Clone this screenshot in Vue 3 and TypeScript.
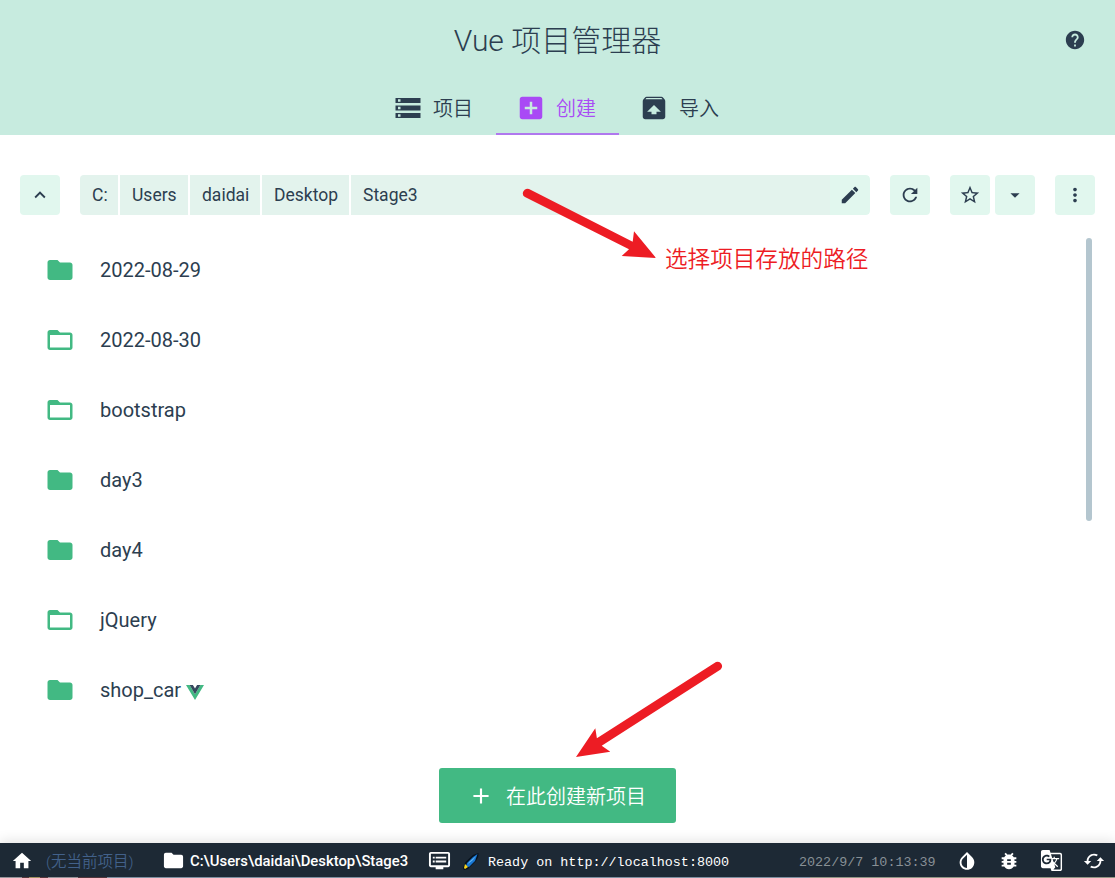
<script setup lang="ts">
interface Tab { label: string; icon: string; active?: boolean }
interface Folder { name: string; filled: boolean; vue?: boolean }

const icons = {
  storage: 'M2 20h20v-4H2v4zm2-3h2v2H4v-2zM2 4v4h20V4H2zm4 3H4V5h2v2zm-4 7h20v-4H2v4zm2-3h2v2H4v-2z',
  addBox: 'M19 3H5c-1.11 0-2 .9-2 2v14c0 1.1.89 2 2 2h14c1.1 0 2-.9 2-2V5c0-1.1-.9-2-2-2zm-2 10h-4v4h-2v-4H7v-2h4V7h2v4h4v2z',
  unarchive: 'M20.55 5.22l-1.39-1.68C18.88 3.21 18.47 3 18 3H6c-.47 0-.88.21-1.15.55L3.46 5.22C3.17 5.57 3 6.01 3 6.5V19c0 1.1.89 2 2 2h14c1.1 0 2-.9 2-2V6.5c0-.49-.17-.93-.45-1.28zM12 9.5l5.5 5.5H14v2h-4v-2H6.5L12 9.5zM5.12 5l.82-1h12l.93 1H5.12z',
  help: 'M12 2C6.48 2 2 6.48 2 12s4.48 10 10 10 10-4.48 10-10S17.52 2 12 2zm1 17h-2v-2h2v2zm2.07-7.75l-.9.92C13.45 12.9 13 13.5 13 15h-2v-.5c0-1.1.45-2.1 1.17-2.83l1.24-1.26c.37-.36.59-.86.59-1.41 0-1.1-.9-2-2-2s-2 .9-2 2H8c0-2.21 1.79-4 4-4s4 1.79 4 4c0 .88-.36 1.68-.93 2.25z',
  up: 'M7.41 15.41L12 10.83l4.59 4.58L18 14l-6-6-6 6z',
  edit: 'M3 17.25V21h3.75L17.81 9.94l-3.75-3.75L3 17.25zM20.71 7.04c.39-.39.39-1.02 0-1.41l-2.34-2.34c-.39-.39-1.02-.39-1.41 0l-1.83 1.83 3.75 3.75 1.83-1.83z',
  refresh: 'M17.65 6.35C16.2 4.9 14.21 4 12 4c-4.42 0-7.99 3.58-7.99 8s3.57 8 7.99 8c3.73 0 6.84-2.55 7.73-6h-2.08c-.82 2.33-3.04 4-5.65 4-3.31 0-6-2.69-6-6s2.69-6 6-6c1.66 0 3.14.69 4.22 1.78L13 11h7V4l-2.35 2.35z',
  star: 'M22 9.24l-7.19-.62L12 2 9.19 8.63 2 9.24l5.46 4.73L5.82 21 12 17.27 18.18 21l-1.63-7.03L22 9.24zM12 15.4l-3.76 2.27 1-4.28-3.32-2.88 4.38-.38L12 6.1l1.71 4.04 4.38.38-3.32 2.88 1 4.28L12 15.4z',
  drop: 'M7 10l5 5 5-5z',
  more: 'M12 8c1.1 0 2-.9 2-2s-.9-2-2-2-2 .9-2 2 .9 2 2 2zm0 2c-1.1 0-2 .9-2 2s.9 2 2 2 2-.9 2-2-.9-2-2-2zm0 6c-1.1 0-2 .9-2 2s.9 2 2 2 2-.9 2-2-.9-2-2-2z',
  folder: 'M10 4H4c-1.1 0-1.99.9-1.99 2L2 18c0 1.1.9 2 2 2h16c1.1 0 2-.9 2-2V8c0-1.1-.9-2-2-2h-8l-2-2z',
  folderOpen: 'M20 6h-8l-2-2H4c-1.1 0-1.99.9-1.99 2L2 18c0 1.1.9 2 2 2h16c1.1 0 2-.9 2-2V8c0-1.1-.9-2-2-2zm0 12H4V8h16v10z',
  add: 'M19 13h-6v6h-2v-6H5v-2h6V5h2v6h6v2z',
  home: 'M10 20v-6h4v6h5v-8h3L12 3 2 12h3v8z',
  dvr: 'M21 3H3c-1.1 0-2 .9-2 2v12c0 1.1.9 2 2 2h5v2h8v-2h5c1.1 0 1.99-.9 1.99-2L23 5c0-1.1-.9-2-2-2zm0 14H3V5h18v12zm-2-9H8v2h11V8zm0 4H8v2h11v-2zM7 8H5v2h2V8zm0 4H5v2h2v-2z',
  contrast: 'M17.66 7.93L12 2.27 6.34 7.93c-3.12 3.12-3.12 8.19 0 11.31C7.9 20.8 9.95 21.58 12 21.58s4.1-.78 5.66-2.34c3.12-3.12 3.12-8.19 0-11.31zM12 19.59c-1.6 0-3.11-.62-4.24-1.76C6.62 16.69 6 15.19 6 13.59s.62-3.11 1.76-4.24L12 5.1v14.49z',
  bug: 'M20 8h-2.81c-.45-.78-1.07-1.45-1.82-1.96L17 4.41 15.59 3l-2.17 2.17C12.96 5.06 12.49 5 12 5s-.96.06-1.41.17L8.41 3 7 4.41l1.62 1.63C7.88 6.55 7.26 7.22 6.81 8H4v2h2.09c-.05.33-.09.66-.09 1v1H4v2h2v1c0 .34.04.67.09 1H4v2h2.81c1.04 1.79 2.97 3 5.19 3s4.15-1.21 5.19-3H20v-2h-2.09c.05-.33.09-.66.09-1v-1h2v-2h-2v-1c0-.34-.04-.67-.09-1H20V8zm-6 8h-4v-2h4v2zm0-4h-4v-2h4v2z',
  translate: 'M21 4H11l-1-3H3c-1.1 0-2 .9-2 2v15c0 1.1.9 2 2 2h8l1 3h9c1.1 0 2-.9 2-2V6c0-1.1-.9-2-2-2zM7 16c-2.76 0-5-2.24-5-5s2.24-5 5-5c1.35 0 2.48.5 3.35 1.3L9.03 8.57c-.38-.36-1.04-.78-2.03-.78-1.74 0-3.15 1.44-3.15 3.21S5.26 14.21 7 14.21c2.01 0 2.84-1.44 2.92-2.41H7v-1.71h4.68c.07.31.12.61.12 1.02C11.8 13.97 9.89 16 7 16zm6.17-5.42h3.7c-.43 1.25-1.11 2.43-2.05 3.47-.31-.35-.6-.72-.86-1.1l-.79-2.37zm8.33 9.92c0 .55-.45 1-1 1H14l2-2.5-1.04-3.1 3.1 3.1.92-.92-3.3-3.25.02-.02c1.13-1.25 1.93-2.69 2.4-4.22H20v-1.3h-4.53V8h-1.29v1.29h-1.44L11.46 5.5h9.04c.55 0 1 .45 1 1v14z',
  loop: 'M19 8l-4 4h3c0 3.31-2.69 6-6 6-1.01 0-1.97-.25-2.8-.7l-1.46 1.46C8.97 19.54 10.43 20 12 20c4.42 0 8-3.58 8-8h3l-4-4zM6 12c0-3.31 2.69-6 6-6 1.01 0 1.97.25 2.8.7l1.46-1.46C15.03 4.46 13.57 4 12 4c-4.42 0-8 3.58-8 8H1l4 4 4-4H6z',
}

const tabs: Tab[] = [
  { label: '项目', icon: icons.storage },
  { label: '创建', icon: icons.addBox, active: true },
  { label: '导入', icon: icons.unarchive },
]
const crumbs: string[] = ['C:', 'Users', 'daidai', 'Desktop', 'Stage3']
const folders: Folder[] = [
  { name: '2022-08-29', filled: true },
  { name: '2022-08-30', filled: false },
  { name: 'bootstrap', filled: false },
  { name: 'day3', filled: true },
  { name: 'day4', filled: true },
  { name: 'jQuery', filled: false },
  { name: 'shop_car', filled: true, vue: true },
]
</script>

<template>
  <div class="page">
    <header class="header">
      <h1 class="title"><span class="brand">Vue</span> 项目管理器</h1>
      <svg class="help" viewBox="0 0 24 24"><path :d="icons.help" /></svg>
      <nav class="tabs">
        <a v-for="t in tabs" :key="t.label" class="tab" :class="{ active: t.active }">
          <svg viewBox="0 0 24 24"><path :d="t.icon" /></svg><span>{{ t.label }}</span>
        </a>
      </nav>
    </header>

    <div class="toolbar">
      <button class="btn up"><svg viewBox="0 0 24 24"><path :d="icons.up" /></svg></button>
      <div class="path">
        <span v-for="(c, i) in crumbs" :key="c" class="crumb" :class="'crumb-' + i"><span>{{ c }}</span></span>
        <button class="btn edit"><svg viewBox="0 0 24 24"><path :d="icons.edit" /></svg></button>
      </div>
      <button class="btn refresh"><svg viewBox="0 0 24 24"><path :d="icons.refresh" /></svg></button>
      <button class="btn star"><svg viewBox="0 0 24 24"><path :d="icons.star" /></svg></button>
      <button class="btn drop"><svg viewBox="0 0 24 24"><path :d="icons.drop" /></svg></button>
      <button class="btn more"><svg viewBox="0 0 24 24"><path :d="icons.more" /></svg></button>
    </div>

    <main class="content">
      <ul class="folders">
        <li v-for="f in folders" :key="f.name">
          <svg class="folder" viewBox="0 0 24 24"><path :d="f.filled ? icons.folder : icons.folderOpen" /></svg>
          <span>{{ f.name }}</span>
          <svg v-if="f.vue" class="vue" viewBox="0 0 18 15">
            <path fill="#42b983" d="M0 0h3.6L9 9.2 14.4 0H18L9 15z" />
            <path fill="#35495e" d="M3.6 0h3.3L9 3.5 11.1 0h3.3L9 9.2z" />
          </svg>
        </li>
      </ul>
      <div class="scrollbar"></div>
    </main>

    <div class="actions">
      <button class="create"><svg viewBox="0 0 24 24"><path :d="icons.add" /></svg><span>在此创建新项目</span></button>
    </div>

    <footer class="status">
      <svg class="home" viewBox="0 0 24 24"><path :d="icons.home" /></svg>
      <span class="none">(无当前项目)</span>
      <svg class="cwd-icon" viewBox="0 0 24 24"><path :d="icons.folder" /></svg>
      <span class="cwd">C:\Users\daidai\Desktop\Stage3</span>
      <svg class="dvr" viewBox="0 0 24 24"><path :d="icons.dvr" /></svg>
      <svg class="rocket" viewBox="0 0 16 17">
        <path fill="#07111c" d="M15.5 0L10 2 2.500 9 0 15l1 2 4-1 8-8 2.200-4z" />
        <path fill="#1976d2" d="M14.500 1L10 4 4 10l-1 3 3 1 6-6z" />
        <path fill="#63b9f5" d="M13 3L6 9l-1 2 5-4z" />
        <path fill="#f9d51c" d="M2 11l3 3-3 2-1-1z" />
      </svg>
      <span class="message">Ready on http://localhost:8000</span>
      <span class="date">2022/9/7 10:13:39</span>
      <svg class="s-contrast" viewBox="0 0 24 24"><path :d="icons.contrast" /></svg>
      <svg class="s-bug" viewBox="0 0 24 24"><path :d="icons.bug" /></svg>
      <svg class="s-lang" viewBox="0 0 24 24"><path :d="icons.translate" /></svg>
      <svg class="s-loop" viewBox="0 0 24 24"><path :d="icons.loop" /></svg>
    </footer>
    <div class="edge"></div>

    <svg class="notes" viewBox="0 0 1115 878">
      <path d="M529 189.100L632.700 241.700 634 231.300 656 257.900 621.700 256 629 249.300 525 197.100A4.500 4.500 0 0 1 529 189.100z" />
      <path d="M716 662.100L596.900 738.300 595.300 728.300 576 757 610.300 751.700 601.700 745.700 720.600 669.400A4.400 4.400 0 0 0 716 662.100z" />
    </svg>
    <span class="note">选择项目存放的路径</span>
  </div>
</template>

<style>
body { margin: 0; overflow: hidden; }
</style>

<style scoped>
.page { position: relative; width: 1115px; height: 878px; display: flex; flex-direction: column; overflow: hidden; background: #fff; color: #2c3e50; font-family: Roboto, "Noto Sans CJK SC", sans-serif; }
.page * { box-sizing: border-box; }
svg { display: block; flex: none; fill: currentColor; }
.header { position: relative; flex: none; height: 135px; background: #c7ebdf; display: flex; flex-direction: column; align-items: center; }
.title { margin: 0; height: 81px; line-height: 82px; font-size: 30px; font-weight: 300; white-space: nowrap; }
.brand { font-weight: 350; }
.help { position: absolute; right: 29px; top: 29px; width: 22px; height: 22px; }
.tabs { display: flex; height: 54px; }
.tab { width: 123px; height: 54px; padding-left: 20px; display: flex; align-items: center; border-bottom: 2px solid transparent; font-size: 20px; font-weight: 350; }
.tab svg { width: 30px; height: 30px; margin: 1px 10px 0 0; }
.tab.active { color: #a94af5; border-color: #b078ee; }
.toolbar { flex: none; height: 100px; padding: 40px 20px 20px; display: flex; }
.btn { width: 40px; height: 40px; flex: none; padding: 0; border: 0; border-radius: 4px; background: #e1f7ee; color: #2c3e50; display: flex; align-items: center; justify-content: center; }
.btn svg { width: 22px; height: 22px; }
.path { width: 790px; margin: 0 20px; display: flex; gap: 2px; border-radius: 4px; overflow: hidden; }
.crumb { flex: none; height: 40px; line-height: 40px; padding-left: 12px; background: #e3f3ed; font-size: 17.500px; white-space: nowrap; }
.crumb-0 { width: 38px; }
.crumb-1 { width: 68px; }
.crumb-2 { width: 70px; }
.crumb-3 { width: 87px; }
.crumb-4 { flex: 1; margin-right: -2px; }
.edit { border-radius: 0 4px 4px 0; }
.refresh { margin-right: 20px; }
.star { margin-right: 5px; }
.drop { margin-right: 20px; }
.content { flex: none; height: 508px; display: flex; justify-content: space-between; }
.folders { list-style: none; margin: 0; padding: 0 0 0 45px; }
.folders li { height: 70px; display: flex; align-items: center; font-size: 20px; }
.folder { width: 30px; height: 30px; margin-right: 25px; color: #42b983; }
.vue { width: 18px; height: 15px; margin: 4px 0 0 5px; }
.scrollbar { width: 6px; height: 283px; margin: 3px 23px 0 0; border-radius: 3px; background: #b4c6cf; }
.actions { flex: none; height: 100px; padding-top: 25px; display: flex; justify-content: center; align-items: flex-start; }
.create { width: 237px; height: 55px; padding: 0 0 0 29px; border: 0; border-radius: 3px; background: #42b983; color: #fff; display: flex; align-items: center; font: 350 20px Roboto, "Noto Sans CJK SC", sans-serif; }
.create svg { width: 26px; height: 26px; margin-right: 12px; }
.status { position: relative; flex: none; height: 34px; background: #1d2935; color: #fff; display: flex; align-items: center; white-space: nowrap; box-shadow: 0 -3px 12px rgba(0, 0, 0, .1); }
.status svg { width: 22px; height: 22px; margin-top: 1px; }
.status .home { margin-left: 11px; }
.none { width: 88px; margin-left: 13px; font-size: 15.500px; font-weight: 350; color: #42618a; }
.status .cwd-icon { width: 23px; height: 23px; margin-left: 28px; }
.cwd { width: 219px; margin: 1px 0 0 5px; font-size: 14.850px; font-weight: 500; }
.status .dvr { width: 23px; height: 23px; margin-left: 19px; }
.status .rocket { width: 16px; height: 17px; margin-left: 12px; margin-top: 2px; }
.message, .date { padding-top: 4px; font-family: "Liberation Mono", monospace; font-size: 13.400px; }
.message { margin-left: 9px; width: 241px; }
.date { margin-left: 70px; width: 137px; color: #889095; }
.status .s-contrast { margin-left: 20px; }
.status .s-bug { margin-left: 20px; }
.status .s-lang { margin-left: 20px; width: 23px; height: 23px; }
.status .s-loop { margin-left: 20px; }
.edge { flex: none; height: 1px; background: linear-gradient(90deg, #99989e 0 22px, #5a393e 22px 29px, #a69662 29px 40px, #5a393e 40px 48px, #99989e 48px 78px, #54383e 78px 107px, #8192a4 107px 810px, #969a88 810px); }
.notes { position: absolute; inset: 0; width: 1115px; height: 878px; pointer-events: none; fill: #ed1c24; }
.note { position: absolute; left: 665px; top: 243px; line-height: 34px; font-size: 22.600px; font-weight: 350; color: #ed1c24; white-space: nowrap; }
</style>
